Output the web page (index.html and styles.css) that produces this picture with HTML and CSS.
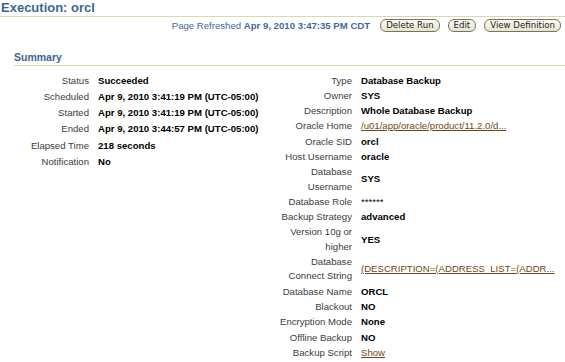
FILE: index.html
```html
<!DOCTYPE html>
<html lang="en">
<head>
 <meta charset="UTF-8" />
 <title>Execution: orcl</title>
 <link rel="stylesheet" href="styles.css">
</head>
<body>
 <!-- Page header -->
 <h1 class="page-title">Execution: orcl</h1>

 <!-- Refresh info and actions -->
 <div class="action-bar">
   <span class="refreshed">Page Refreshed <b>Apr 9, 2010 3:47:35 PM CDT</b></span>
   <button class="btn">Delete Run</button>
   <button class="btn">Edit</button>
   <button class="btn">View Definition</button>
 </div>

 <!-- Summary section -->
 <h2 class="section-title">Summary</h2>
 <div class="summary">
   <div class="props props-left">
     <div class="label">Status</div><div class="value">Succeeded</div>
     <div class="label">Scheduled</div><div class="value">Apr 9, 2010 3:41:19 PM (UTC-05:00)</div>
     <div class="label">Started</div><div class="value">Apr 9, 2010 3:41:19 PM (UTC-05:00)</div>
     <div class="label">Ended</div><div class="value">Apr 9, 2010 3:44:57 PM (UTC-05:00)</div>
     <div class="label">Elapsed Time</div><div class="value">218 seconds</div>
     <div class="label">Notification</div><div class="value">No</div>
   </div>
   <div class="props props-right">
     <div class="label">Type</div><div class="value">Database Backup</div>
     <div class="label">Owner</div><div class="value">SYS</div>
     <div class="label">Description</div><div class="value">Whole Database Backup</div>
     <div class="label">Oracle Home</div><div class="value"><a href="#">/u01/app/oracle/product/11.2.0/d...</a></div>
     <div class="label">Oracle SID</div><div class="value">orcl</div>
     <div class="label">Host Username</div><div class="value">oracle</div>
     <div class="label">Database Username</div><div class="value">SYS</div>
     <div class="label">Database Role</div><div class="value plain">******</div>
     <div class="label">Backup Strategy</div><div class="value">advanced</div>
     <div class="label">Version 10g or higher</div><div class="value">YES</div>
     <div class="label">Database Connect String</div><div class="value"><a href="#">(DESCRIPTION=(ADDRESS_LIST=(ADDR...</a></div>
     <div class="label">Database Name</div><div class="value">ORCL</div>
     <div class="label">Blackout</div><div class="value">NO</div>
     <div class="label">Encryption Mode</div><div class="value">None</div>
     <div class="label">Offline Backup</div><div class="value">NO</div>
     <div class="label">Backup Script</div><div class="value"><a href="#">Show</a></div>
   </div>
 </div>
</body>
</html>
```

FILE: styles.css
```css
/* Reset */
* {
  margin: 0;
  padding: 0;
  box-sizing: border-box;
}
html, body {
  width: 100%;
  height: 100%;
  overflow: hidden;
  background: #fff;
  font-family: "Liberation Sans", Arial, sans-serif;
  font-size: 9.6px;
  color: #000;
}
/* Page header */
.page-title {
  font-size: 13px;
  line-height: 15px;
  font-weight: bold;
  color: #3d6594;
  padding-left: 1px;
  padding-bottom: 1px;
  border-bottom: 1px solid #d6d9b2;
}
/* Refresh info + buttons */
.action-bar {
  display: flex;
  justify-content: flex-end;
  align-items: center;
  gap: 8px;
  margin-top: 2px;
  padding-right: 4px;
}
.refreshed {
  color: #3d6aa0;
  margin-right: 2px;
}
.refreshed b {
  font-weight: bold;
}
.btn {
  height: 13px;
  padding: 0 5px;
  font-family: "DejaVu Sans", Verdana, sans-serif;
  font-size: 8.6px;
  line-height: 11px;
  color: #222;
  background: linear-gradient(#fbfbf5, #e6e4cf);
  border: 1px solid #76745f;
  border-radius: 6px;
  cursor: pointer;
}
/* Section header */
.section-title {
  margin: 19px 0 0 14px;
  font-size: 10.5px;
  line-height: 13px;
  font-weight: bold;
  color: #3d6594;
  padding-bottom: 1px;
  border-bottom: 1px solid #d6d9b2;
}
/* Two property columns */
.summary {
  display: flex;
  margin-top: 7px;
}
.props {
  display: grid;
  align-items: center;
  align-content: start;
}
.props-left {
  width: 280px;
  padding-left: 14px;
  grid-template-columns: 84px auto;
}
.props-right {
  flex: 1;
  grid-template-columns: 81px auto;
}
.label {
  text-align: right;
  color: #3c3c3c;
  padding-right: 9px;
}
.props-left .label,
.props-left .value {
  line-height: 14.4px;
  padding-top: 0.9px;
  padding-bottom: 0.9px;
}
.props-right .label,
.props-right .value {
  line-height: 14.3px;
  padding-top: 0.5px;
  padding-bottom: 0.5px;
}
.props-right .label {
  padding-right: 0;
  margin-right: 9px;
}
.value {
  font-weight: bold;
  white-space: nowrap;
}
.value.plain {
  font-weight: normal;
}
.value a {
  color: #704818;
  font-weight: normal;
}
```
